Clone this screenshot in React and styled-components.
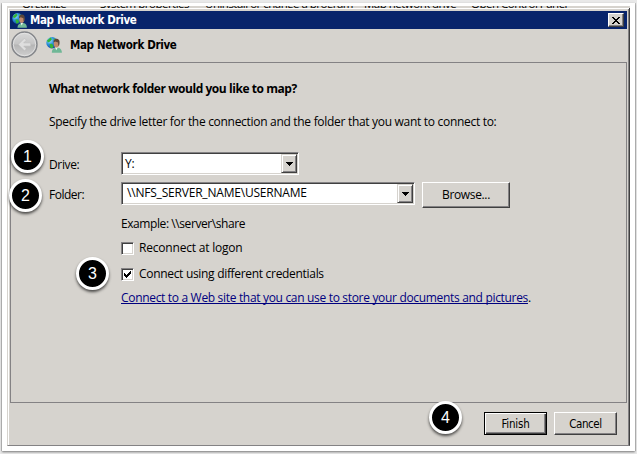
import React from 'react';
import styled, { createGlobalStyle } from 'styled-components';

const Global = createGlobalStyle`
  * { box-sizing: border-box; }
  html, body { margin: 0; background: #fff; overflow: hidden; }
`;

const Page = styled.div`
  width: 637px;
  height: 454px;
  padding: 3px 2px 3px 2px;
  background: #e9e9e9;
`;

const Card = styled.div`
  position: relative;
  height: 448px;
  padding: 3px 5px 0;
  background: #fff;
  box-shadow: 0 1px 2px #777, -1px 0 0 #c4c4c4, 1px 0 0 #c4c4c4;
  font-family: 'Open Sans', 'Noto Sans', sans-serif;
  font-size: 12px;
  line-height: 16px;
  color: #000;
`;

const Strip = styled.div`
  display: flex;
  align-items: flex-end;
  width: 623px;
  height: 2px;
  overflow: hidden;
  background: #d6d3ce;
  padding-left: 15px;
`;

const StripItem = styled.span`
  width: ${(p) => p.$w}px;
  flex: none;
  height: 16px;
  margin-bottom: -4px;
  font-size: 11.5px;
  letter-spacing: -0.5px;
  white-space: nowrap;
`;

const Dialog = styled.div`
  width: 623px;
  height: 438px;
  padding: 1px;
  background: #d6d3ce;
  border-left: 1px solid #d6d3ce;
  border-right: 1px solid #404040;
  border-bottom: 1px solid #848284;
  box-shadow: inset 1px 1px 0 #fff, inset -1px 0 0 #848284;
`;

const TitleBar = styled.div`
  display: flex;
  align-items: center;
  height: 18px;
  margin: 2px 1px 0 1px;
  padding: 0 3px 0 2px;
  background: #08246b;
  color: #fff;
`;

const Title = styled.span`
  flex: 1;
  margin-left: ${(p) => p.$gap}px;
  font-family: 'DejaVu Sans Condensed', 'DejaVu Sans', sans-serif;
  font-stretch: condensed;
  font-weight: bold;
  font-size: 11.5px;
  letter-spacing: -0.33px;
  white-space: nowrap;
`;

const CloseButton = styled.div`
  display: flex;
  align-items: center;
  justify-content: center;
  width: 16px;
  height: 14px;
  background: #d6d3ce;
  border: 1px solid;
  border-color: #fff #404040 #404040 #fff;
  box-shadow: inset -1px -1px 0 #848284;
`;

const Header = styled.div`
  display: flex;
  align-items: center;
  height: 33px;
  padding: 0 0 2px 2px;
`;

const HeaderIcon = styled.span`
  display: flex;
  margin-left: 8px;
`;

const Panel = styled.div`
  height: 341px;
  margin: 0 1px;
  padding: 18px 0 0 38px;
  border: 1px solid #848284;
`;

const Line = styled.div`
  display: flex;
  align-items: ${(p) => p.$align || 'center'};
  height: ${(p) => p.$h || 16}px;
  margin-top: ${(p) => p.$mt || 0}px;
  margin-left: ${(p) => p.$ml || 0}px;
`;

const Text = styled.span`
  font-weight: ${(p) => (p.$bold ? 700 : 400)};
  letter-spacing: ${(p) => p.$ls || 0}px;
  white-space: pre;
`;

const Label = styled(Text)`
  width: 72px;
  padding-top: 5px;
`;

const Combo = styled.div`
  display: flex;
  width: ${(p) => p.$w}px;
  height: ${(p) => p.$h}px;
  padding: 1px;
  background: #fff;
  border: 1px solid;
  border-color: #848284 #fff #fff #848284;
  box-shadow: inset 1px 1px 0 #404040, inset -1px -1px 0 #d6d3ce;
`;

const ComboValue = styled(Text)`
  flex: 1;
  padding-left: ${(p) => p.$pl}px;
  line-height: ${(p) => p.$lh}px;
`;

const ComboArrow = styled.span`
  display: flex;
  align-items: center;
  justify-content: center;
  width: 16px;
  background: #d6d3ce;
  border: 1px solid;
  border-color: #d6d3ce #404040 #404040 #d6d3ce;
  box-shadow: inset 1px 1px 0 #fff, inset -1px -1px 0 #848284;
`;

const Button = styled.div`
  display: flex;
  align-items: center;
  justify-content: center;
  width: ${(p) => p.$w}px;
  height: ${(p) => p.$h}px;
  margin-left: ${(p) => p.$ml || 0}px;
  background: #d6d3ce;
  border: 1px solid;
  border-color: ${(p) => (p.$default ? '#000' : '#fff #404040 #404040 #fff')};
  box-shadow: ${(p) =>
    p.$default
      ? 'inset 1px 1px 0 #fff, inset -1px -1px 0 #404040, inset -2px -2px 0 #848284'
      : 'inset -1px -1px 0 #848284'};
  letter-spacing: -0.35px;
`;

const ActionButton = styled(Button)`
  font-family: 'DejaVu Sans Condensed', 'DejaVu Sans', sans-serif;
  font-stretch: condensed;
  font-size: 11.5px;
  letter-spacing: ${(p) => p.$ls}px;
`;

const Check = styled.span`
  display: flex;
  align-items: center;
  justify-content: center;
  width: 13px;
  height: 13px;
  margin-right: 5px;
  background: #fff;
  border: 1px solid;
  border-color: #848284 #fff #fff #848284;
  box-shadow: inset 1px 1px 0 #404040, inset -1px -1px 0 #d6d3ce;
`;

const Link = styled(Text)`
  color: #00007f;
  text-decoration: underline;
  text-decoration-thickness: 1px;
  text-underline-offset: 1px;
  text-decoration-skip-ink: none;
`;

const Footer = styled.div`
  display: flex;
  justify-content: flex-end;
  gap: 7px;
  padding: 9px 11px 0 0;
`;

const Badge = styled.div`
  position: absolute;
  left: ${(p) => p.$x}px;
  top: ${(p) => p.$y}px;
  display: flex;
  align-items: center;
  justify-content: center;
  width: 33px;
  height: 33px;
  border: 3px solid #fff;
  border-radius: 50%;
  background: #000;
  box-shadow: 0 2px 3px rgba(0, 0, 0, 0.65);
  color: #fff;
  font: 16px 'Liberation Sans', sans-serif;
`;

const NetworkIcon = ({ size = 16 }) => (
  <svg width={size} height={size} viewBox="0 0 16 16">
    <defs>
      <radialGradient id="globe" cx="0.3" cy="0.3" r="0.8">
        <stop offset="0" stopColor="#a5e4ff" />
        <stop offset="0.45" stopColor="#2b91dc" />
        <stop offset="1" stopColor="#113a94" />
      </radialGradient>
    </defs>
    <circle cx="6" cy="5.8" r="5.7" fill="url(#globe)" />
    <path d="M1 3.5 4.5.5 6 2 4.2 4.4 1.8 5.500zM3.500 7l2.500-.3 1.500 2.300L6.700 11l-2.200.3z" fill="#33b536" />
    <path d="M8 1.200 11 3 9 4.300 7.400 3z" fill="#54c652" />
    <path d="M5.800 15.800c.1-3.500 1.800-4.700 4-5l2.400-.1c2.500.5 3.700 2.300 3.700 5.100z" fill="#6fb796" />
    <path d="m9 10.500 1.300 2.700 1.500-2.700z" fill="#e9f6ee" />
    <ellipse cx="10.400" cy="6.800" rx="2.700" ry="3.600" fill="#c08a6c" />
    <path d="M7.500 5.600C7.200 2.700 9 1.400 10.800 1.700c2.700.3 3.400 3 2.300 6.800l-.8.2-.2-3.200-2.800-1z" fill="#5a463a" />
  </svg>
);

const BackIcon = () => (
  <svg width="27" height="27" viewBox="0 0 28 28">
    <defs>
      <linearGradient id="back" x1="0" y1="0" x2="0" y2="1">
        <stop offset="0" stopColor="#d8d8d8" />
        <stop offset="0.48" stopColor="#c5c5c5" />
        <stop offset="0.52" stopColor="#b5b5b5" />
        <stop offset="1" stopColor="#cfcfcf" />
      </linearGradient>
    </defs>
    <circle cx="14" cy="14" r="12.4" fill="url(#back)" />
    <circle cx="14" cy="14" r="12.9" fill="none" stroke="#85878b" strokeWidth="1.6" />
    <circle cx="14" cy="14" r="11.6" fill="none" stroke="#e4e4e4" strokeWidth="0.9" />
    <path d="m14 7.5-6.5 6.5 6.5 6.5 2-2-2.8-2.8h7.3v-3.4h-7.3L16 9.5z" fill="#dedede" stroke="#b5b5b5" strokeWidth="0.5" />
  </svg>
);

const Arrow = () => (
  <svg width="7" height="4" viewBox="0 0 7 4" shapeRendering="crispEdges">
    <path d="M0 0h7v1H0zM1 1h5v1H1zM2 2h3v1H2zM3 3h1v1H3z" />
  </svg>
);

const Cross = () => (
  <svg width="8" height="7" viewBox="0 0 8 7" shapeRendering="crispEdges">
    <path d="M0 0h2v1H0zM6 0h2v1H6zM1 1h2v1H1zM5 1h2v1H5zM2 2h4v1H2zM3 3h2v1H3zM2 4h4v1H2zM1 5h2v1H1zM5 5h2v1H5zM0 6h2v1H0zM6 6h2v1H6z" />
  </svg>
);

const Tick = () => (
  <svg width="7" height="7" viewBox="0 0 7 7" shapeRendering="crispEdges">
    <path d="M0 2h1v3H0zM1 3h1v3H1zM2 4h1v3H2zM3 3h1v3H3zM4 2h1v3H4zM5 1h1v3H5zM6 0h1v3H6z" />
  </svg>
);

export default function App() {
  return (
    <Page>
      <Global />
      <Card>
        <Strip>
          <StripItem $w={78}>Organize</StripItem>
          <StripItem $w={105}>System properties</StripItem>
          <StripItem $w={159}>Uninstall or change a program</StripItem>
          <StripItem $w={107}>Map network drive</StripItem>
          <StripItem $w={110}>Open Control Panel</StripItem>
        </Strip>
        <Dialog>
          <TitleBar>
            <NetworkIcon size={15} />
            <Title $gap={3}>Map Network Drive</Title>
            <CloseButton><Cross /></CloseButton>
          </TitleBar>
          <Header>
            <BackIcon />
            <HeaderIcon><NetworkIcon /></HeaderIcon>
            <Title $gap={8}>Map Network Drive</Title>
          </Header>
          <Panel>
            <Line><Text $bold $ls={-0.44}>What network folder would you like to map?</Text></Line>
            <Line $mt={17}><Text $ls={-0.3}>Specify the drive letter for the connection and the folder that you want to connect to:</Text></Line>
            <Line $mt={22} $h={23} $align="flex-start">
              <Label $ls={-0.35}>Drive:</Label>
              <Combo $w={178} $h={23}>
                <ComboValue $pl={2} $lh={19} $ls={-0.2}>Y:</ComboValue>
                <ComboArrow><Arrow /></ComboArrow>
              </Combo>
            </Line>
            <Line $mt={7} $h={26} $align="flex-start">
              <Label $ls={-0.5}>Folder:</Label>
              <Combo $w={294} $h={23}>
                <ComboValue $pl={4} $lh={18} $ls={-0.2}>{'\\\\NFS_SERVER_NAME\\USERNAME'}</ComboValue>
                <ComboArrow><Arrow /></ComboArrow>
              </Combo>
              <Button $w={88} $h={26} $ml={7}>Browse...</Button>
            </Line>
            <Line $ml={72} $mt={8}><Text $ls={-0.42}>{'Example: \\\\server\\share'}</Text></Line>
            <Line $ml={72} $mt={8}><Check /><Text $ls={-0.2}>Reconnect at logon</Text></Line>
            <Line $ml={72} $mt={10}><Check><Tick /></Check><Text $ls={-0.31}>Connect using different credentials</Text></Line>
            <Line $ml={72} $mt={8}>
              <Link $ls={-0.32}>Connect to a Web site that you can use to store your documents and pictures</Link>
              <Text>.</Text>
            </Line>
          </Panel>
          <Footer>
            <ActionButton $w={63} $h={23} $ls={-0.2} $default>Finish</ActionButton>
            <ActionButton $w={63} $h={23} $ls={-0.45}>Cancel</ActionButton>
          </Footer>
        </Dialog>
        <Badge $x={9} $y={137}>1</Badge>
        <Badge $x={7} $y={176}>2</Badge>
        <Badge $x={74} $y={254}>3</Badge>
        <Badge $x={427} $y={398}>4</Badge>
      </Card>
    </Page>
  );
}
